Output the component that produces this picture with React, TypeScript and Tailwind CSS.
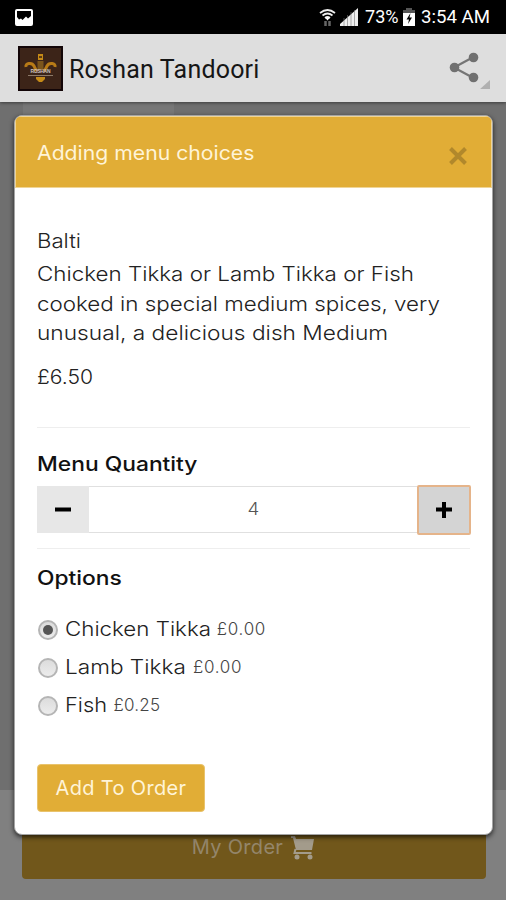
import { useState } from "react";

type Option = {
  id: string;
  name: string;
  price: number;
  nameClass: string;
  priceClass: string;
};

const OPTIONS: Option[] = [
  {
    id: "chicken",
    name: "Chicken Tikka",
    price: 0,
    nameClass: "mr-[21px] scale-x-[1.116]",
    priceClass: "tracking-[0.7px]",
  },
  {
    id: "lamb",
    name: "Lamb Tikka",
    price: 0,
    nameClass: "mr-[21px] scale-x-[1.13]",
    priceClass: "tracking-[0.7px]",
  },
  {
    id: "fish",
    name: "Fish",
    price: 0.25,
    nameClass: "mr-[10px] scale-x-[1.09]",
    priceClass: "tracking-[0.2px]",
  },
];

function StatusBar() {
  return (
    <div className="flex h-[34px] items-center bg-black pl-[15px] pr-[15px] text-white">
      <svg width="18" height="17" viewBox="0 0 18 17">
        <rect x="1" y="1" width="16" height="15" rx="1" fill="#000" stroke="#fff" strokeWidth="2" />
        <path d="M2 8l2 2.500 2-1 1.500 1.500L11 7.500l2 2 3-2.500v9H2z" fill="#fff" />
      </svg>
      <div className="ml-auto flex items-center font-[Roboto] text-[19px] font-medium">
        <svg width="17" height="19" viewBox="0 0 17 19">
          <path
            d="M1 5q7.500-6 15 0M3.500 7.500q5-4 10 0M6 10q2.500-2 5 0"
            fill="none"
            stroke="#eee"
            strokeWidth="1.700"
          />
          <path d="M6 9.500h5L8.500 12.500z" fill="#fff" />
          <path d="M6.500 13v5M10.500 13v5" fill="none" stroke="#666" strokeWidth="2.500" />
        </svg>
        <svg className="ml-[4px]" width="19" height="18" viewBox="0 0 19 18">
          <path d="M0 18V16L18 0v18z" fill="#eee" />
          <path d="M4 10v8M7.500 7v11M11 4v14M14.500 2v16" stroke="#777" strokeWidth=".6" />
        </svg>
        <span className="ml-[6px] inline-block w-[35px] origin-left scale-x-[0.95] font-normal">73%</span>
        <svg className="ml-[3px]" width="12" height="18" viewBox="0 0 12 18">
          <path d="M3 0h6v2h3v4H0V2h3z" fill="#555" />
          <path d="M0 5h12v13H0z" fill="#fff" />
          <path d="M7.500 5L3.500 11.500H6L5 16l4-6.500H6.500z" fill="#000" />
        </svg>
        <span className="ml-[6px] inline-block w-[70px] origin-left scale-x-[0.98] whitespace-nowrap font-normal">
          3:54 AM
        </span>
      </div>
    </div>
  );
}

function Logo() {
  return (
    <svg width="45" height="45" viewBox="0 0 45 45">
      <rect width="45" height="45" fill="#120507" />
      <rect x="2" y="2" width="41" height="41" fill="#3c2418" />
      <path d="M20 8h5v6h-5z" fill="#c58a17" />
      <path d="M21 10h3v2h-3z" fill="#5d3b16" />
      <path d="M19.500 15h6v9h-6z" fill="#7b551c" />
      <path
        d="M8 21c-1-4 6-5 8-1 1 2 1 3 3 5M37 21c1-4-6-5-8-1-1 2-1 3-3 5"
        fill="none"
        stroke="#b87b17"
        strokeWidth="3"
      />
      <path d="M18 31h9v2l-3 3h-3l-3-3z" fill="#c58a17" />
      <text
        x="22.500"
        y="27"
        textAnchor="middle"
        textLength="20"
        fontFamily="Liberation Sans"
        fontSize="5"
        fontWeight="700"
        fill="#c9c0be"
      >
        ROSHAN
      </text>
      <path d="M10 29.500h25" stroke="#8d7a68" />
    </svg>
  );
}

function CartIcon() {
  return (
    <svg className="ml-[8px] mt-[1px] shrink-0" width="25" height="24" viewBox="0 0 25 24" fill="#a39b8b">
      <path d="M0 0h4l1 3h18l-2 11H5L2 2H0z" />
      <path d="M4.500 13l-1 4h17" fill="none" stroke="#a39b8b" strokeWidth="2" />
      <circle cx="6" cy="21" r="2.500" />
      <circle cx="19" cy="21" r="2.500" />
    </svg>
  );
}

function AppBar() {
  return (
    <header className="relative flex h-[68px] items-center bg-[#dedede] pl-[18px] shadow-[0_1px_3px_rgba(0,0,0,0.45)]">
      <Logo />
      <h1 className="ml-[6px] mt-[3px] whitespace-nowrap font-[Roboto] text-[25px] tracking-[0.2px] text-[#161616]">
        Roshan Tandoori
      </h1>
      <svg className="ml-auto mr-[16px] mt-[2px]" width="42" height="40" viewBox="0 0 42 40">
        <path d="M24.500 8.500L6 18.500l18.500 10" fill="none" stroke="#757575" strokeWidth="2.200" />
        <circle cx="25.500" cy="8.500" r="4.800" fill="#707070" />
        <circle cx="6.500" cy="18.500" r="4.800" fill="#707070" />
        <circle cx="25.500" cy="28.500" r="4.800" fill="#707070" />
        <path d="M42 31v10H31z" fill="#b0b0b0" />
      </svg>
    </header>
  );
}

export default function App() {
  const [quantity, setQuantity] = useState(4);
  const [selected, setSelected] = useState("chicken");

  return (
    <div className="relative flex h-[900px] w-[506px] flex-col overflow-hidden bg-[#6f6f6f] font-[Inter,sans-serif]">
      <StatusBar />
      <AppBar />
      <main className="flex-1">
        <div className="ml-[23px] h-10 w-[151px] bg-[#777]" />
      </main>
      <footer className="flex h-[110px] items-end bg-[#808080] pl-[22px] pr-[20px] pb-[21px]">
        <button className="flex h-[64px] w-full items-center justify-center rounded bg-[#71571b] text-[20px] text-[#94866b]">
          <span className="tracking-[0.3px]">My Order</span>
          <CartIcon />
        </button>
      </footer>

      <div className="absolute left-[14px] top-[115px] flex h-[720px] w-[479px] flex-col overflow-hidden rounded-[8px] border border-[#a5a5a5] bg-white shadow-[0_2px_5px_rgba(0,0,0,0.7)]">
        <div className="flex h-[72px] shrink-0 items-center justify-between border border-[#f0d596] bg-[#e1ad36] pl-[21px] pr-[24px]">
          <h2 className="mt-[2px] origin-left scale-x-[1.06] text-[20px] text-[#fff4d8]">Adding menu choices</h2>
          <button aria-label="Close" className="mt-[7px]">
            <svg width="18" height="18" viewBox="0 0 18 18">
              <path d="M1.500 1.500l15 15M16.500 1.500l-15 15" stroke="#b1882b" strokeWidth="4" />
            </svg>
          </button>
        </div>

        <div className="px-[22px] pt-[38px] text-[20px] font-light text-[#222]">
          <div className="w-fit origin-left scale-x-[1.11] leading-[30px]">Balti</div>
          <p className="mt-[4px] whitespace-nowrap leading-[29.5px]">
            <span className="block w-fit origin-left scale-x-[1.119]">Chicken Tikka or Lamb Tikka or Fish</span>
            <span className="block w-fit origin-left scale-x-[1.118]">cooked in special medium spices, very</span>
            <span className="block w-fit origin-left scale-x-[1.135]">unusual, a delicious dish Medium</span>
          </p>
          <div className="mt-[13px] w-fit origin-left scale-x-[1.055] leading-[30px]">£6.50</div>
          <hr className="mt-[35px] border-[#eee]" />

          <h3 className="mt-[21px] w-fit origin-left scale-x-[1.14] text-[20px] font-medium leading-[30px] text-[#111]">
            Menu Quantity
          </h3>
          <div className="-mr-px mt-[6px] flex h-[50px] items-center">
            <button
              onClick={() => setQuantity(Math.max(1, quantity - 1))}
              className="flex h-[47px] w-[52px] items-center justify-center bg-[#e7e7e7]"
            >
              <svg width="16" height="16" viewBox="0 0 16 16">
                <path d="M0 7.500h16" stroke="#000" strokeWidth="4" />
              </svg>
            </button>
            <div className="flex h-[47px] flex-1 items-center justify-center border-y border-[#e0e0e0] text-[17px] text-[#555]">
              <span className="scale-x-[1.1]">{quantity}</span>
            </div>
            <button
              onClick={() => setQuantity(quantity + 1)}
              className="flex h-[50px] w-[54px] items-center justify-center rounded-[2px] border-2 border-[#e5b48a] bg-[#d4d4d4]"
            >
              <svg width="16" height="16" viewBox="0 0 16 16">
                <path d="M0 7.500h16M8 0v16" stroke="#000" strokeWidth="4" />
              </svg>
            </button>
          </div>
          <hr className="mt-[13px] border-[#eee]" />

          <h3 className="mt-[14px] w-fit origin-left scale-x-[1.14] text-[20px] font-medium leading-[30px] text-[#111]">
            Options
          </h3>
          <div className="mt-[17px]">
            {OPTIONS.map((o) => (
              <label key={o.id} className="flex h-[38px] items-center whitespace-nowrap">
                <span
                  onClick={() => setSelected(o.id)}
                  className="ml-px mt-[3px] flex h-[20px] w-[20px] items-center justify-center rounded-full border-2 border-[#b5b5b5] bg-linear-to-b from-[#dcdcdc] to-[#ececec]"
                >
                  {selected === o.id && <span className="h-[10px] w-[10px] rounded-full bg-[#555]" />}
                </span>
                <span className={`ml-[7px] inline-block origin-left ${o.nameClass}`}>{o.name}</span>
                <span className={`mt-[2px] text-[17px] text-[#444] ${o.priceClass}`}>
                  £{o.price.toFixed(2)}
                </span>
              </label>
            ))}
          </div>

          <button className="mt-[40px] h-[48px] w-[168px] whitespace-nowrap rounded-[4px] border border-[#e9c36c] bg-[#e1ad36] text-[20px] font-normal tracking-[0.35px] text-[#fff4d8]">
            Add To Order
          </button>
        </div>
      </div>
    </div>
  );
}
